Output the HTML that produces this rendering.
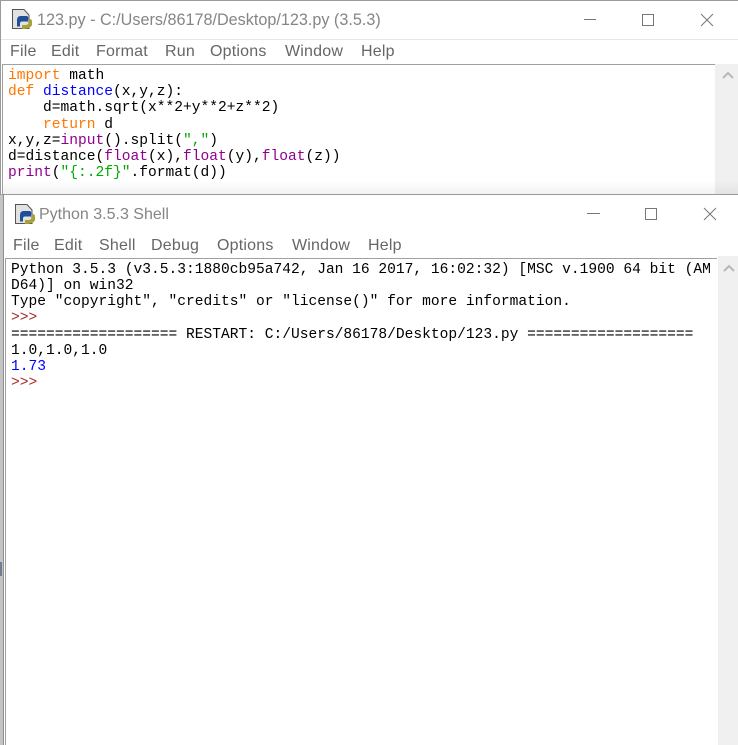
<!DOCTYPE html>
<html><head><meta charset="utf-8">
<style>
html,body{margin:0;padding:0;background:#fff}
body{width:738px;height:745px;position:relative;overflow:hidden;filter:blur(.35px)}
.a{position:absolute}
.m{position:absolute;font-family:"Liberation Sans",sans-serif;font-size:16px;letter-spacing:.2px;line-height:20px;color:#666;white-space:pre}
.t{position:absolute;font-family:"Liberation Sans",sans-serif;font-size:16.2px;line-height:20px;color:#858585;white-space:pre}
.c{position:absolute;font-family:"Liberation Mono",monospace;font-size:14.58px;line-height:16px;color:#000;white-space:pre}
.o{color:#ff7700}.b{color:#0000ff}.p{color:#900090}.g{color:#00aa00}.r{color:#a52a2a}
</style></head><body>
<!-- editor window -->
<div class="a" style="left:0;top:0;width:738px;height:195px;background:#fff"></div>
<div class="a" style="left:0;top:0;width:738px;height:1px;background:#9a9a9a"></div>
<div class="a" style="left:0;top:0;width:1px;height:195px;background:#9a9a9a"></div>
<div class="a" style="left:1px;top:39px;width:737px;height:1px;background:#e6e6e6"></div>
<div class="a" style="left:2px;top:64px;width:713px;height:1px;background:#a0a0a0"></div>
<div class="a" style="left:2px;top:64px;width:1px;height:131px;background:#a0a0a0"></div>
<div class="a" style="left:715px;top:64px;width:23px;height:131px;background:#f0f0f0"></div>
<div class="a" style="left:3px;top:180px;width:735px;height:14px;background:linear-gradient(rgba(0,0,0,0),rgba(0,0,0,.05))"></div>
<svg class="a" style="left:721px;top:70px" width="14" height="10"><path d="M2 8 L7 3 L12 8" fill="none" stroke="#b8b8b8" stroke-width="2"/></svg>
<svg class="a" style="left:11px;top:8px" width="22" height="22" viewBox="0 0 22 22">
<path d="M1.500 1.500H13L18 7V20.500H1.500Z" fill="#e2e2e2" stroke="#555" stroke-width="1"/>
<path d="M9 8h7a2.500 2.500 0 0 1 1 3.500v2H11a2 2 0 0 0-2 2v3H6V12a4 4 0 0 1 3-4Z" fill="#1f4f98"/>
<path d="M11 21c5 0 9-1 10-4v-4c0-1-1-2-3-2v3c0 2-2 3-4 3h-3Z" fill="#a9a23a"/>
</svg>
<div class="t" style="left:37px;top:10px">123.py - C:/Users/86178/Desktop/123.py (3.5.3)</div>
<div class="m" style="left:10px;top:42px">File</div>
<div class="m" style="left:51px;top:42px">Edit</div>
<div class="m" style="left:96px;top:42px">Format</div>
<div class="m" style="left:165px;top:42px">Run</div>
<div class="m" style="left:210px;top:42px">Options</div>
<div class="m" style="left:285px;top:42px">Window</div>
<div class="m" style="left:361px;top:42px">Help</div>
<svg class="a" style="left:580px;top:8px" width="150" height="24"><path d="M4 11.500H16M62.500 6.500H73.500V17.500H62.500ZM121 6 L133 18M133 6 L121 18" fill="none" stroke="#777" stroke-width="1"/></svg>
<div class="c" style="left:8px;top:68px"><span class="o">import</span> math</div>
<div class="c" style="left:8px;top:84px"><span class="o">def</span> <span class="b">distance</span>(x,y,z):</div>
<div class="c" style="left:8px;top:100px">    d=math.sqrt(x**2+y**2+z**2)</div>
<div class="c" style="left:8px;top:117px">    <span class="o">return</span> d</div>
<div class="c" style="left:8px;top:133px">x,y,z=<span class="p">input</span>().split(<span class="g">","</span>)</div>
<div class="c" style="left:8px;top:149px">d=distance(<span class="p">float</span>(x),<span class="p">float</span>(y),<span class="p">float</span>(z))</div>
<div class="c" style="left:8px;top:165px"><span class="p">print</span>(<span class="g">"{:.2f}"</span>.format(d))</div>
<!-- left strip -->
<div class="a" style="left:0;top:195px;width:3px;height:550px;background:#c4c4c4"></div>
<div class="a" style="left:0;top:562px;width:2px;height:14px;background:#6f7f8f"></div>
<!-- shell window -->
<div class="a" style="left:3px;top:194px;width:735px;height:551px;background:#fff"></div>
<div class="a" style="left:0;top:194px;width:738px;height:1px;background:#9a9a9a"></div>
<div class="a" style="left:3px;top:194px;width:1px;height:551px;background:#8f8f8f"></div>
<div class="a" style="left:5px;top:258px;width:712px;height:1px;background:#a0a0a0"></div>
<div class="a" style="left:5px;top:258px;width:1px;height:487px;background:#a0a0a0"></div>
<div class="a" style="left:718px;top:256px;width:20px;height:489px;background:#f0f0f0"></div>
<svg class="a" style="left:722px;top:263px" width="14" height="10"><path d="M2 8 L7 3 L12 8" fill="none" stroke="#b8b8b8" stroke-width="2"/></svg>
<svg class="a" style="left:14px;top:203px" width="22" height="22" viewBox="0 0 22 22">
<path d="M1.500 1.500H13L18 7V20.500H1.500Z" fill="#e2e2e2" stroke="#555" stroke-width="1"/>
<path d="M9 8h7a2.500 2.500 0 0 1 1 3.500v2H11a2 2 0 0 0-2 2v3H6V12a4 4 0 0 1 3-4Z" fill="#1f4f98"/>
<path d="M11 21c5 0 9-1 10-4v-4c0-1-1-2-3-2v3c0 2-2 3-4 3h-3Z" fill="#a9a23a"/>
</svg>
<div class="t" style="left:39px;top:205px;font-size:16px">Python 3.5.3 Shell</div>
<div class="m" style="left:13px;top:236px">File</div>
<div class="m" style="left:54px;top:236px">Edit</div>
<div class="m" style="left:99px;top:236px">Shell</div>
<div class="m" style="left:151px;top:236px">Debug</div>
<div class="m" style="left:217px;top:236px">Options</div>
<div class="m" style="left:292px;top:236px">Window</div>
<div class="m" style="left:368px;top:236px">Help</div>
<svg class="a" style="left:583px;top:202px" width="150" height="24"><path d="M4 11.500H17M62.500 6.500H73.500V17.500H62.500ZM121 6 L133 18M133 6 L121 18" fill="none" stroke="#777" stroke-width="1"/></svg>
<div class="c" style="left:11px;top:262px">Python 3.5.3 (v3.5.3:1880cb95a742, Jan 16 2017, 16:02:32) [MSC v.1900 64 bit (AM</div>
<div class="c" style="left:11px;top:278px">D64)] on win32</div>
<div class="c" style="left:11px;top:294px">Type "copyright", "credits" or "license()" for more information.</div>
<div class="c r" style="left:11px;top:310px">&gt;&gt;&gt;</div>
<div class="c" style="left:11px;top:327px">=================== RESTART: C:/Users/86178/Desktop/123.py ===================</div>
<div class="c" style="left:11px;top:343px">1.0,1.0,1.0</div>
<div class="c b" style="left:11px;top:359px">1.73</div>
<div class="c r" style="left:11px;top:375px">&gt;&gt;&gt;</div>
</body></html>
